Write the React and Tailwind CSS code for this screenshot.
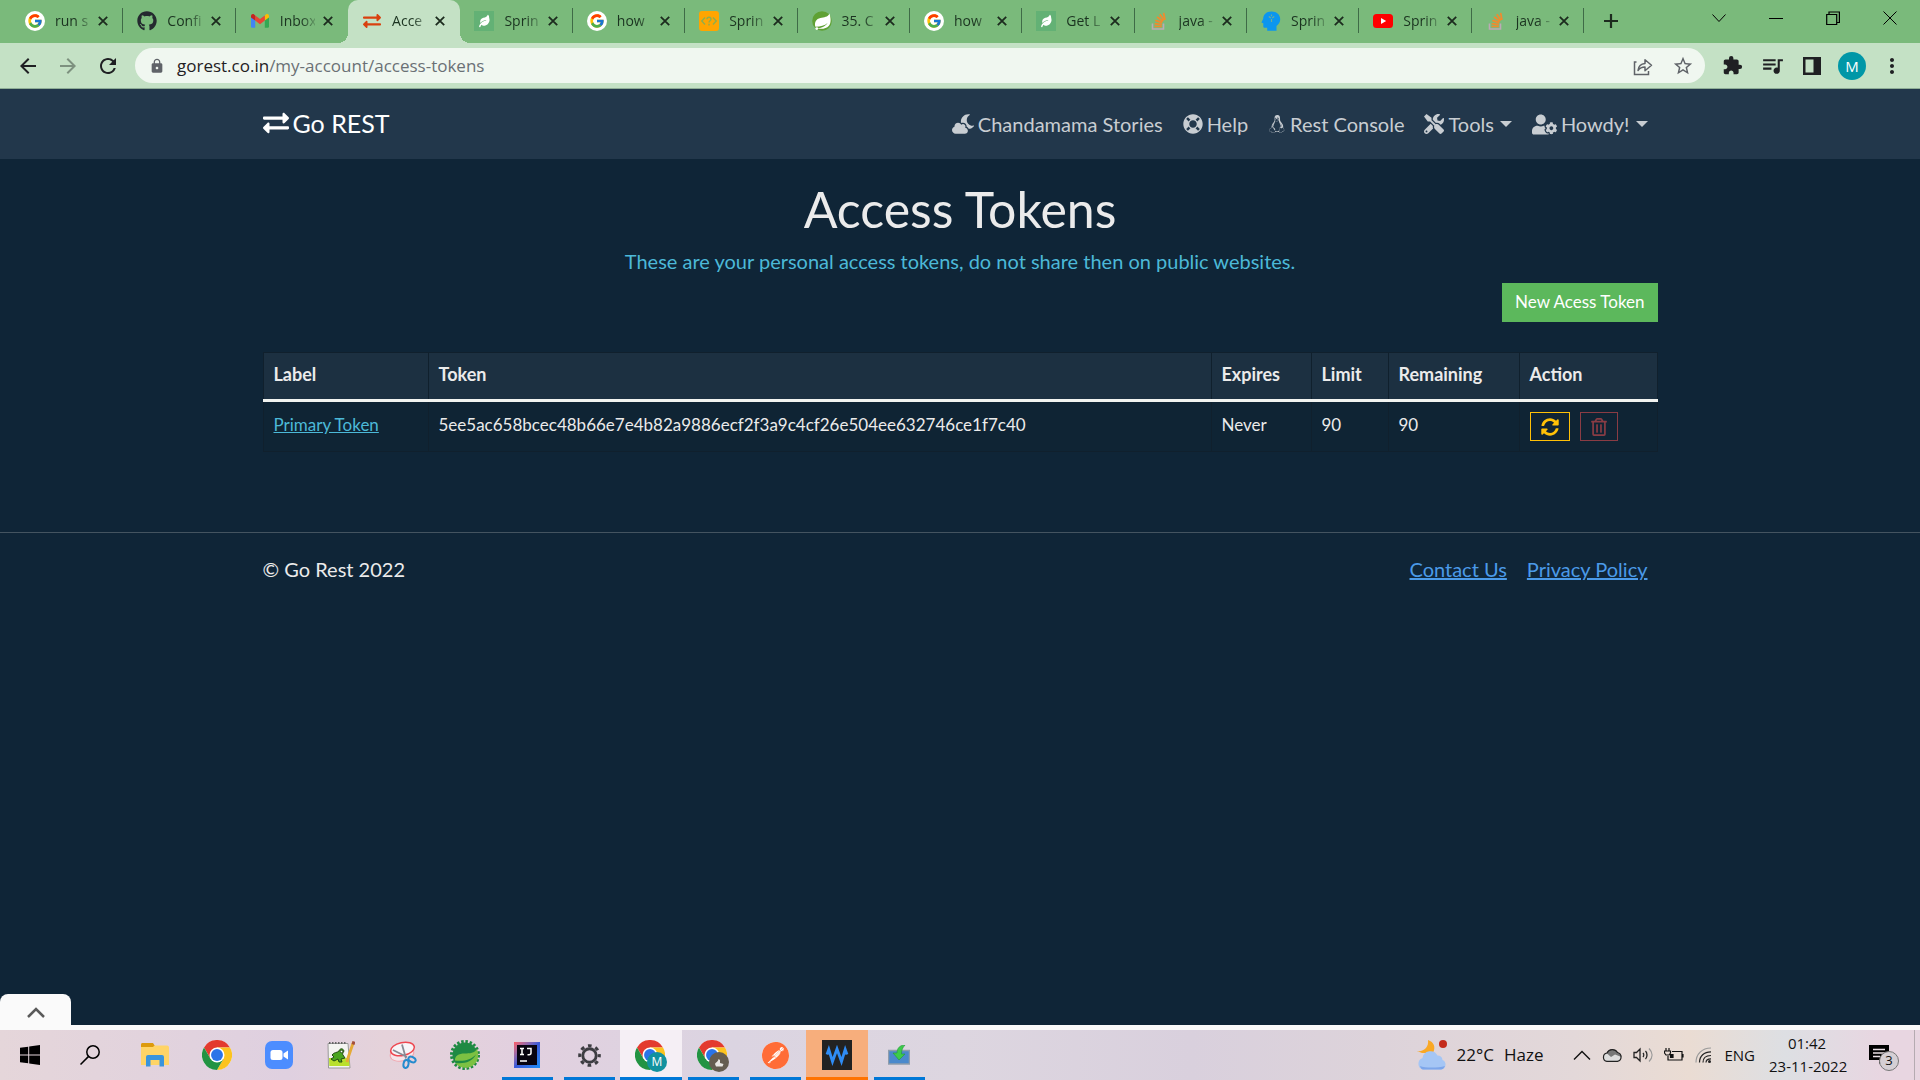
import React from "react";
import {
  FaExchangeAlt,
  FaCloudMoon,
  FaLifeRing,
  FaLinux,
  FaTools,
  FaUserCog,
  FaSyncAlt,
  FaRegTrashAlt,
  FaGithub,
  FaLeaf,
} from "react-icons/fa";
import { FcGoogle } from "react-icons/fc";
import { SiPostman } from "react-icons/si";
import { MdArrowBack, MdArrowForward, MdRefresh, MdLock, MdStarBorder, MdExtension, MdQueueMusic, MdMoreVert } from "react-icons/md";

/* ---------- favicons ---------- */

const Google = () => (
  <span className="flex size-5 items-center justify-center rounded-full bg-white">
    <FcGoogle className="size-4" />
  </span>
);

const Gmail = () => (
  <svg viewBox="0 0 20 20" className="size-5">
    <path d="M1 5v10.500a1.200 1.200 0 0 0 1.200 1.200h3V8.600z" fill="#4285f4" />
    <path d="M19 5v10.500a1.200 1.200 0 0 1-1.200 1.200h-3V8.600z" fill="#34a853" />
    <path d="M14.800 4.400v5.200L19 6.400V5c0-1.600-1.800-2.500-3.100-1.500z" fill="#fbbc04" />
    <path d="M5.200 9.600V4.400L10 8l4.800-3.600v5.200L10 13.200z" fill="#ea4335" />
    <path d="M1 5v1.400l4.200 3.200V4.400l-1.100-.9C2.800 2.500 1 3.400 1 5z" fill="#c5221f" />
  </svg>
);

const Baeldung = () => (
  <span className="flex size-5 items-center justify-center bg-[#63b175]">
    <FaLeaf className="size-3 -rotate-12 text-white" />
  </span>
);

const CodeQuestion = () => (
  <svg viewBox="0 0 20 20" className="size-5">
    <rect width="20" height="20" rx="3" fill="#ffa500" />
    <g fill="none" stroke="#8fae4c" strokeWidth="1.400">
      <path d="M6 6.500 2.800 10 6 13.500M14 6.500 17.200 10 14 13.500" />
      <path d="M8 8.200c0-2.600 4-2.600 4 0 0 1.600-2 1.600-2 3.400M10 12.800v1.600" />
    </g>
  </svg>
);

const SpringFavicon = () => (
  <svg viewBox="0 0 20 20" className="size-5">
    <circle cx="10" cy="10" r="9.800" fill="#5fa134" />
    <path d="M17.500 2.500c1.600 5.400 1.700 9.500-.6 12.300-2.600 3.200-7.300 3.400-11.600 2.700 3.600-.4 8-1.800 10.300-5.500-3 2.700-7 3.600-12.200 3.700-1.400-4.300.9-8 5-8.800 3.800-.7 7.300-.6 9.100-4.400z" fill="#fff" />
    <circle cx="4.800" cy="17.600" r="1.400" fill="#fff" />
  </svg>
);

const StackOverflow = () => (
  <svg viewBox="0 0 20 20" className="size-5">
    <path d="M3.500 12.500v5.500h11v-5.500" fill="none" stroke="#bcaab5" strokeWidth="1.600" />
    <g stroke="#f28a2d" strokeWidth="1.700">
      <path d="M5.500 15.500h7.300M5.600 12.600l7.200 1M6.300 9.400l6.900 2.200M8 6l6 4.200M10.800 3.300l4.200 5.900M14.600 1.800l1.400 7" />
    </g>
  </svg>
);

const BlueHead = () => (
  <svg viewBox="0 0 20 20" className="size-5">
    <path d="M10.500.5C5 .5 2.200 4 2.200 7.800L.4 11.600l1.900.6v3.300c0 .9.600 1.300 1.500 1.300h2.400v2.900h9.300v-4.800c2.300-1.700 3.700-4 3.700-6.700C19.200 3.800 15.800.5 10.500.5z" fill="#0c96ef" />
    <path d="M10.500 11V8M7.800 5.500l2 1.500M13.200 5.500l-2 1.500M10.500 3.600v1.600" stroke="#6fae9c" strokeWidth="1.200" />
  </svg>
);

const YouTube = () => (
  <svg viewBox="0 0 20 20" className="size-5">
    <rect y="3" width="20" height="14" rx="3.500" fill="#f00" />
    <path d="M8 7v6l5.200-3z" fill="#fff" />
  </svg>
);

const TABS = [
  { title: "run s", icon: <Google /> },
  { title: "Confi", icon: <FaGithub className="size-5 text-[#24292f]" /> },
  { title: "Inbox", icon: <Gmail /> },
  { title: "Acce", icon: <FaExchangeAlt className="size-[18px] text-[#d9400f]" />, active: true },
  { title: "Sprin", icon: <Baeldung /> },
  { title: "how", icon: <Google /> },
  { title: "Sprin", icon: <CodeQuestion /> },
  { title: "35. C", icon: <SpringFavicon /> },
  { title: "how", icon: <Google /> },
  { title: "Get L", icon: <Baeldung /> },
  { title: "java -", icon: <StackOverflow /> },
  { title: "Sprin", icon: <BlueHead /> },
  { title: "Sprin", icon: <YouTube /> },
  { title: "java -", icon: <StackOverflow /> },
];

const Cross = ({ className }) => (
  <svg viewBox="0 0 10 10" className={className} fill="none" stroke="currentColor" strokeWidth="1.800">
    <path d="M.8.8l8.400 8.400M9.200.8.8 9.200" />
  </svg>
);

function Tab({ tab, next }) {
  const divider = tab.active || next?.active ? "border-transparent" : "border-[#3f6b47]";
  return (
    <div className={"relative flex h-full min-w-0 flex-1 items-center pb-0.5 " + (tab.active ? "rounded-t-[10px] bg-[#c4e1c5]" : "")}>
      {tab.active && (
        <>
          <span className="absolute bottom-0 -left-2.5 size-2.5 bg-[radial-gradient(circle_at_0_0,transparent_10px,#c4e1c5_10px)]" />
          <span className="absolute -right-2.5 bottom-0 size-2.5 bg-[radial-gradient(circle_at_100%_0,transparent_10px,#c4e1c5_10px)]" />
        </>
      )}
      <div className={"flex h-[25px] w-full items-center border-r pr-3.5 pl-3.5 " + divider}>
        <span className="flex w-5 shrink-0 justify-center">{tab.icon}</span>
        <a href="#tab" className="ml-2.5 min-w-0 flex-1 overflow-hidden [mask-image:linear-gradient(to_right,black_60%,rgb(0_0_0/0.25))] text-sm whitespace-nowrap text-[#1b3320]">
          {tab.title}
        </a>
        <button aria-label="Close tab" className="ml-2 shrink-0">
          <Cross className="size-2.5 text-[#1c2b1e]" />
        </button>
      </div>
    </div>
  );
}

const windowButton = "flex w-[57px] items-center justify-center";

function TabStrip() {
  return (
    <div className="flex h-[43px] bg-[#7aba7b] pl-[11px]">
      <div className="flex min-w-0 flex-1">
        {TABS.map((tab, i) => (
          <Tab key={i} tab={tab} next={TABS[i + 1]} />
        ))}
      </div>
      <button aria-label="New tab" className="flex w-[54px] items-center justify-center pb-0.5 text-[#1c2b1e]">
        <svg viewBox="0 0 16 16" className="size-4" stroke="currentColor" strokeWidth="2.200">
          <path d="M8 1v14M1 8h14" />
        </svg>
      </button>
      <div className="mr-0.5 ml-[52px] flex h-9 text-black">
        <button aria-label="Search tabs" className={windowButton}>
          <svg viewBox="0 0 14 14" className="size-3.5" fill="none" stroke="currentColor"><path d="M.5 3.500 7 10.500l6.500-7" /></svg>
        </button>
        <button aria-label="Minimize" className={windowButton}>
          <svg viewBox="0 0 14 14" className="size-3.5" stroke="currentColor"><path d="M0 7.500h14" /></svg>
        </button>
        <button aria-label="Restore" className={windowButton}>
          <svg viewBox="0 0 14 14" className="size-3.5" fill="none" stroke="currentColor" strokeWidth="1.200"><path d="M.7 3.500h10v10H.7zM3 3.500V1h10.400v10.500H11" /></svg>
        </button>
        <button aria-label="Close" className={windowButton}>
          <svg viewBox="0 0 14 14" className="size-3.5" stroke="currentColor"><path d="M.5.5l13 13M13.500.5l-13 13" /></svg>
        </button>
      </div>
    </div>
  );
}

const toolButton = "flex w-10 items-center justify-center";

function Toolbar() {
  return (
    <div className="flex h-[46px] items-center border-b border-[#8fae97] bg-[#c4e1c5] pr-2 pl-2 text-[#1f2023]">
      <button aria-label="Back" className={toolButton}><MdArrowBack className="size-6" /></button>
      <button aria-label="Forward" className={toolButton + " text-[#7d917f]"}><MdArrowForward className="size-6" /></button>
      <button aria-label="Reload" className={toolButton}><MdRefresh className="size-6" /></button>
      <div className="mr-[7px] ml-[7px] flex h-[35px] flex-1 items-center rounded-full bg-[#f0f7f0] pr-0.5 pl-3.5 text-[#5f6368]">
        <MdLock className="size-4 shrink-0" />
        <label className="relative ml-3 flex-1 text-[17px] leading-6">
          <input aria-label="Address" defaultValue="gorest.co.in/my-account/access-tokens" className="block w-full bg-transparent text-[#6a7075] outline-none" />
          <span aria-hidden="true" className="pointer-events-none absolute top-0 left-0 bg-[#f0f7f0] text-[#1f2023]">gorest.co.in</span>
        </label>
        <button aria-label="Share" className={toolButton}>
          <svg viewBox="0 0 20 20" className="size-5" fill="none" stroke="currentColor" strokeWidth="1.500">
            <path d="M3.500 6H1.500v12.500h14V15" />
            <path d="M5 14.500c.5-4.500 3-6.700 7-7V3.700l6.500 5.500-6.500 5.500V11c-3 0-5.200.9-7 3.500z" strokeLinejoin="round" />
          </svg>
        </button>
        <button aria-label="Bookmark" className={toolButton}><MdStarBorder className="size-[22px]" /></button>
      </div>
      <button aria-label="Extensions" className={toolButton}><MdExtension className="size-[21px]" /></button>
      <button aria-label="Media" className={toolButton}><MdQueueMusic className="size-[25px]" /></button>
      <button aria-label="Side panel" className={toolButton}>
        <svg viewBox="0 0 18 18" className="size-[18px]"><path d="M0 0h18v18H0z" fill="currentColor" /><path d="M2.500 2.500h8v13h-8z" fill="#c4e1c5" /></svg>
      </button>
      <button aria-label="Profile" className={toolButton}>
        <span className="flex size-7 items-center justify-center rounded-full bg-[#0097a7] text-[15px] leading-5 text-white">M</span>
      </button>
      <button aria-label="Menu" className={toolButton}><MdMoreVert className="size-6" /></button>
    </div>
  );
}

/* ---------- page ---------- */

const container = "mx-auto w-[calc(100%-3rem)] max-w-[1395px]";
const navLink = "flex items-center gap-1";

const Caret = () => (
  <svg viewBox="0 0 12 6" className="ml-0.5 h-1.5 w-3" fill="currentColor"><path d="M0 0h12L6 6z" /></svg>
);

function Navbar() {
  return (
    <nav className="bg-[#22374b]">
      <div className={container + " flex h-[70px] items-center justify-between"}>
        <a href="#home" className="flex items-center gap-1 pb-0.5 text-[25px] leading-8 text-white">
          <FaExchangeAlt className="size-[26px]" />
          Go REST
        </a>
        <div className="flex gap-5 pr-2.5 text-xl text-[#c8cdd2]">
          <a href="#stories" className={navLink}><FaCloudMoon className="size-[22px]" />Chandamama Stories</a>
          <a href="#help" className={navLink}><FaLifeRing className="size-5" />Help</a>
          <a href="#console" className={navLink}><FaLinux className="size-[18px]" />Rest Console</a>
          <button className={navLink}><FaTools className="size-5" />Tools<Caret /></button>
          <button className={navLink}><FaUserCog className="size-[25px]" />Howdy!<Caret /></button>
        </div>
      </div>
    </nav>
  );
}

const cell = "border-x border-[#10202d] px-2.5 text-left";

function TokenTable() {
  return (
    <table className="mt-[30px] w-full table-fixed border-collapse bg-[#0f2434]">
      <thead className="border-t border-b-[3px] border-t-[#10202d] border-b-[#f1f3f0] bg-[#1c3041] text-lg text-[#ebebeb]">
        <tr className="h-12">
          <th className={cell + " w-[165px] pb-1"}>Label</th>
          <th className={cell + " pb-1"}>Token</th>
          <th className={cell + " w-[100px] pb-1"}>Expires</th>
          <th className={cell + " w-[77px] pb-1"}>Limit</th>
          <th className={cell + " w-[131px] pb-1"}>Remaining</th>
          <th className={cell + " w-[138px] pb-1"}>Action</th>
        </tr>
      </thead>
      <tbody className="text-[17px] leading-6 text-[#ebebeb]">
        <tr className="h-[51px] border-b border-[#10202d]">
          <td className={cell + " pb-1"}><a href="#token" className="text-[#4cb9d8] underline">Primary Token</a></td>
          <td className={cell + " pb-1"}>5ee5ac658bcec48b66e7e4b82a9886ecf2f3a9c4cf26e504ee632746ce1f7c40</td>
          <td className={cell + " pb-1"}>Never</td>
          <td className={cell + " pb-1"}>90</td>
          <td className={cell + " pb-1"}>90</td>
          <td className={cell}>
            <div className="flex gap-2.5">
              <button aria-label="Regenerate" className="flex h-[29px] w-10 items-center justify-center border border-[#ffc107] text-[#ffc107]"><FaSyncAlt className="size-[18px]" /></button>
              <button aria-label="Delete" className="flex h-[29px] w-[38px] items-center justify-center border border-[#8a3c44] text-[#8a3c44]"><FaRegTrashAlt className="size-[18px]" /></button>
            </div>
          </td>
        </tr>
      </tbody>
    </table>
  );
}

function Page() {
  return (
    <div className="relative flex flex-1 flex-col bg-[#0f2537] font-[Lato,sans-serif]">
      <Navbar />
      <main className={container + " flex flex-col pt-5"}>
        <h1 className="mb-2 text-center text-[50px] leading-[60px] text-[#ebebeb]">Access Tokens</h1>
        <p className="text-center text-xl text-[#4cb9d8]">These are your personal access tokens, do not share then on public websites.</p>
        <button className="mt-2 h-[39px] self-end bg-[#5cb85c] px-[13px] pb-0.5 text-[17px] text-white">New Acess Token</button>
        <TokenTable />
      </main>
      <footer className="mt-20 border-t border-[#445460]">
        <div className={container + " flex justify-between pt-[22px] text-xl text-[#ebebeb]"}>
          <span>© Go Rest 2022</span>
          <div className="flex gap-5 pr-2.5 text-[#4b9ae8]">
            <a href="#contact" className="underline">Contact Us</a>
            <a href="#privacy" className="underline">Privacy Policy</a>
          </div>
        </div>
      </footer>
      <button aria-label="Show panel" className="absolute bottom-0 left-0 flex h-[31px] w-[71px] items-center justify-center rounded-t-lg bg-[#fafafa] pt-1.5 text-[#5a5a5a]">
        <svg viewBox="0 0 18 11" className="h-[11px] w-[18px]" fill="none" stroke="currentColor" strokeWidth="2.500"><path d="M1 10l8-8 8 8" /></svg>
      </button>
    </div>
  );
}

/* ---------- taskbar ---------- */

const Chrome = ({ className = "size-[30px]" }) => (
  <svg viewBox="0 0 48 48" className={className}>
    <circle cx="24" cy="24" r="24" fill="#fff" />
    <path d="M24 12h20.800A24 24 0 0 0 3.200 12l10.400 18z" fill="#e33b2e" />
    <path d="M34.400 30 24 48A24 24 0 0 0 44.800 12H24z" fill="#fcc31e" />
    <path d="M13.600 30 3.200 12A24 24 0 0 0 24 48l10.400-18z" fill="#229342" />
    <circle cx="24" cy="24" r="12" fill="#fff" />
    <circle cx="24" cy="24" r="9.500" fill="#2a74e8" />
  </svg>
);

const Explorer = () => (
  <svg viewBox="0 0 28 24" className="h-6 w-7">
    <path d="M0 1.500C0 .7.600 0 1.500 0H12l2 3v4H0z" fill="#dd9a0c" />
    <path d="M0 4h12l1.500-1.500H26a2 2 0 0 1 2 2V22H0z" fill="#ffd466" />
    <path d="M5 23.500V14a2 2 0 0 1 2-2h14a2 2 0 0 1 2 2v9.500h-4.500V17h-9v6.500z" fill="#3a94dc" />
  </svg>
);

const Zoom = () => (
  <svg viewBox="0 0 28 28" className="size-7">
    <rect width="28" height="28" rx="7" fill="#4c8dff" />
    <rect x="5.500" y="9" width="12" height="10" rx="2.500" fill="#fff" />
    <path d="M18.500 12.500 23 9.500v9l-4.500-3z" fill="#fff" />
  </svg>
);

const Notepad = () => (
  <svg viewBox="0 0 28 28" className="size-7">
    <path d="M1 2.500h20L23 27H1.500z" fill="#f4f4f1" stroke="#999" />
    <path d="M2 2h18" stroke="#666" strokeWidth="2" strokeDasharray="1.500 1.500" />
    <path d="M2 17h20l.5 8H2.300z" fill="#b9e02c" />
    <path d="M5 14c2-3 5-2 7-4 1-3 4-3 5 0-1 2-2 3-1 4l2 3-4 1 1 3h-3l-1-3-4 2-3-2 3-2z" fill="#4aa51f" stroke="#234d12" />
    <circle cx="14.500" cy="10.500" r="1.300" fill="#fff" stroke="#234d12" />
    <path d="M26.500 1 21 17l-1 4" stroke="#e5aa36" strokeWidth="2.800" fill="none" />
    <path d="M27 .5l-1 3" stroke="#a34d3c" strokeWidth="3" />
  </svg>
);

const Snip = () => (
  <svg viewBox="0 0 28 28" className="size-7" fill="none">
    <ellipse cx="13" cy="13" rx="12" ry="7" transform="rotate(-12 13 13)" fill="#f5e5ea" stroke="#f0a5ad" />
    <ellipse cx="13.500" cy="8" rx="12" ry="6.500" transform="rotate(-12 13.500 8)" fill="#f7f5f8" stroke="#ee4851" strokeWidth="1.500" />
    <path d="M4 9l14 7M13 3.500l4 14" stroke="#888b95" strokeWidth="1.800" />
    <ellipse cx="23" cy="18.500" rx="3.800" ry="2.500" transform="rotate(25 23 18.500)" stroke="#258bce" strokeWidth="2" />
    <ellipse cx="17" cy="23" rx="2.500" ry="4" transform="rotate(10 17 23)" stroke="#258bce" strokeWidth="2" />
  </svg>
);

const SpringTools = () => (
  <svg viewBox="0 0 30 30" className="size-[30px]">
    <circle cx="15" cy="15" r="13.500" fill="none" stroke="#1f8a43" strokeWidth="3" strokeDasharray="2.500 1.740" />
    <circle cx="15" cy="15" r="12.500" fill="#1f8a43" />
    <path d="M27 9c2.500 7 1 13-4 16.500-6 4-14 2.500-17.500-2.500 9 1 16.500-1 20.500-8.500-5 5.500-12 7-21 6C4.500 16 9 13.500 14.500 13.500 20 13.500 24.500 13 27 9z" fill="#7cc142" />
  </svg>
);

const IntelliJ = () => (
  <span className="flex size-[26px] items-center justify-center bg-linear-to-br from-[#fc5a63] via-[#3a59d8] to-[#158df7]">
    <svg viewBox="0 0 20 20" className="size-5">
      <path d="M0 0h20v20H0z" fill="#080410" />
      <path d="M3 3.500h4M5 3.500v6M3 9.500h4M10 3.500h4V8c0 1.200-.8 1.700-2 1.700h-1.500M3 16h7" fill="none" stroke="#fff" strokeWidth="1.500" />
    </svg>
  </span>
);

const Gear = () => (
  <svg viewBox="0 0 24 24" className="size-[23px]" fill="none" stroke="#3d3d42">
    <circle cx="12" cy="12" r="7" strokeWidth="3" />
    <circle cx="12" cy="12" r="10.200" strokeWidth="3.200" strokeDasharray="3.800 4.211" strokeDashoffset="1.900" />
  </svg>
);

const Badged = ({ children }) => (
  <span className="relative mt-0.5 block size-8">
    <Chrome />
    {children}
  </span>
);

const Wave = () => (
  <svg viewBox="0 0 30 30" className="size-[30px]">
    <path d="M0 0h30v30H0z" fill="#222222" />
    <path d="M5 14.500 6.800 9.500 10.500 21.500 15 9 19.500 21.500 23.200 9.500 25 14.500" fill="none" stroke="#2f8cf5" strokeWidth="2.800" />
  </svg>
);

const Download = () => (
  <svg viewBox="0 0 22 20" className="h-5 w-[22px]">
    <path d="M.5 5.500h21v13.500H.5z" fill="#4a89cc" stroke="#8f9dac" strokeWidth="1.500" />
    <path d="M17 0c-5 0-8 3-8 8H5l6 7 6-6h-3.500c0-4 1-6 3.500-9z" fill="#3ccb4a" stroke="#23963a" strokeWidth=".6" />
  </svg>
);

const APPS = [
  { name: "File Explorer", icon: <Explorer /> },
  { name: "Chrome", icon: <Chrome /> },
  { name: "Zoom", icon: <Zoom /> },
  { name: "Notepad++", icon: <Notepad /> },
  { name: "Snipping Tool", icon: <Snip /> },
  { name: "Spring Tool Suite", icon: <SpringTools /> },
  { name: "IntelliJ IDEA", icon: <IntelliJ />, state: "open" },
  { name: "Settings", icon: <Gear />, state: "open" },
  {
    name: "Chrome, profile M",
    state: "active",
    icon: (
      <Badged>
        <span className="absolute right-0 bottom-0 flex size-5 items-center justify-center rounded-full bg-[#12929f] text-xs text-white">M</span>
      </Badged>
    ),
  },
  {
    name: "Chrome, second profile",
    state: "open",
    icon: (
      <Badged>
        <svg viewBox="0 0 20 20" className="absolute right-0 bottom-0 size-5">
          <circle cx="10" cy="10" r="10" fill="#655d50" />
          <path d="M6 12c1-2 3-2 3.500-5l1.500 1v3l3.500 1-1 2.500H7z" fill="#e8e6e2" />
        </svg>
      </Badged>
    ),
  },
  {
    name: "Postman",
    state: "open",
    icon: (
      <span className="flex rounded-full bg-white">
        <SiPostman className="size-[27px] text-[#ff6c37]" />
      </span>
    ),
  },
  { name: "Recorder", icon: <Wave />, state: "alert" },
  { name: "Installer", icon: <Download />, state: "open" },
];

const slotStyle = { open: "", active: "bg-[#f5eff5]", alert: "bg-[#f7ae7c]" };
const barStyle = {
  open: "w-[51px] bg-[#0078d7]",
  active: "w-full bg-[#0078d7]",
  alert: "w-full bg-[#ff7300]",
};

const Weather = () => (
  <svg viewBox="0 0 30 30" className="size-[30px]">
    <path d="M11 0c6 2 8 7 5 13H5L0 11c7 1 12-4 11-11z" fill="#f9a825" />
    <path d="M6 29.500a6 6 0 0 1-.5-11.500 8 8 0 0 1 15-2.500 5 5 0 0 1 5 4.500 5 5 0 0 1-1 9.500z" fill="#a5c6f5" />
    <path d="M3 26c5 2 18 2 25 0-1 2.500-2.500 3.500-4 3.500H6c-1.500 0-2.500-1.500-3-3.500z" fill="#7da6ea" />
    <circle cx="26" cy="4" r="4" fill="#c42b1c" />
  </svg>
);

function Tray() {
  return (
    <div className="flex items-center text-[17px] text-[#111]">
      <Weather />
      <span className="ml-2.5">22°C</span>
      <span className="ml-2.5">Haze</span>
      <div className="ml-[30px] flex items-center gap-[11px]">
        <svg viewBox="0 0 18 10" className="h-2.5 w-[18px]" fill="none" stroke="currentColor" strokeWidth="1.400"><path d="M1 9.500l8-8 8 8" /></svg>
        <svg viewBox="0 0 20 14" className="h-3.5 w-5">
          <path d="M5 13.300a4.200 4.200 0 0 1 0-8.300 6 6 0 0 1 10.500-.5 4.500 4.500 0 0 1 0 8.800z" fill="#ddd" />
          <path d="M4.500 5C6.500.5 13 0 15.500 4.500c2.500.3 4 2 4 4.500L13 6.500 9 9z" fill="#777" />
          <path d="M5 13.300a4.200 4.200 0 0 1 0-8.300 6 6 0 0 1 10.500-.5 4.500 4.500 0 0 1 0 8.800z" fill="none" stroke="#222" strokeWidth="1.200" />
        </svg>
        <svg viewBox="0 0 20 16" className="h-4 w-5" fill="none" stroke="#222" strokeWidth="1.300">
          <path d="M1 5.500h2.500L7 2v12l-3.500-3.500H1zM10 6c1 1 1 3 0 4M12.500 4c2 2 2 6 0 8" />
          <path d="M16 1.500c4 4 4 9 0 13" stroke="#999" />
        </svg>
        <svg viewBox="0 0 20 14" className="h-3.5 w-5" fill="none" stroke="#111" strokeWidth="1.200">
          <path d="M8 3.500h10v8.500H4V8M19 6v3.500M2 0v3M5 0v3M.5 3h6v2L5 7H2L.5 5z" />
          <path d="M6.500 6.500H9v3H6.500z" fill="#111" />
        </svg>
        <svg viewBox="0 0 17 16" className="h-4 w-[17px]" fill="none" stroke="#222" strokeWidth="1.200">
          <path d="M1 15.500C1 7 7 1 16 1" stroke="#999" />
          <path d="M4.500 15.500C4.500 9 9 4.800 16 4.800M8 15.500c0-4.500 3-7 8-7M11 15.500c0-2.500 1.800-3.700 5-3.700" />
          <circle cx="14.500" cy="14.500" r="1.500" fill="#222" stroke="none" />
        </svg>
      </div>
      <span className="ml-3 text-[15px]">ENG</span>
      <div className="ml-3.5 w-[76px] text-center text-[15px] leading-[23px] whitespace-nowrap">
        <div>01:42</div>
        <div>23-11-2022</div>
      </div>
      <button aria-label="Notifications" className="relative ml-6 h-8 w-[30px]">
        <svg viewBox="0 0 20 20" className="size-5"><path d="M0 0h20v15h-6l-4 4v-4H0z" /><path d="M4 4.500h12M4 8h12M4 11.500h7" stroke="#eadfe5" strokeWidth="1.300" /></svg>
        <span className="absolute right-0 bottom-0 flex size-5 items-center justify-center rounded-full border border-[#777] bg-[#d5cfd4] text-[13px]">3</span>
      </button>
      <span className="ml-[15px] h-[50px] w-1.5 border-l border-[#b5abb1]" />
    </div>
  );
}

function Taskbar() {
  return (
    <div className="flex h-[50px] justify-between bg-[linear-gradient(to_right,#e5d6da_0%,#dfd0e0_15%,#e5d2da_20%,#e2d0df_27%,#dbd4e1_38%,#ddd6e0_50%,#d9d0dd_62%,#ddd3da_72%,#e3d8d9_82%,#eadcd3_88%,#dddfe3_93%,#e8d6e1_98%)]">
      <div className="flex">
        <button aria-label="Start" className="flex w-[60px] items-center justify-center">
          <svg viewBox="0 0 20 20" className="size-5"><path d="M0 2.800 8.200 1.700v7.800H0zM9.200 1.500 20 0v9.500H9.200zM0 10.500h8.200v7.800L0 17.200zM9.200 10.500H20V20L9.200 18.500z" /></svg>
        </button>
        <button aria-label="Search" className="mr-1 flex w-[60px] items-center justify-center">
          <svg viewBox="0 0 20 20" className="size-5" fill="none" stroke="#000" strokeWidth="1.500"><circle cx="13" cy="7" r="6.200" /><path d="M8.600 11.400.5 19.500" /></svg>
        </button>
        {APPS.map((app) => (
          <button key={app.name} aria-label={app.name} className={"relative flex w-[62px] items-center justify-center " + (slotStyle[app.state] ?? "")}>
            {app.icon}
            {app.state && (
              <span className="absolute inset-x-0 bottom-0 flex justify-center">
                <span className={"h-[3px] " + barStyle[app.state]} />
              </span>
            )}
          </button>
        ))}
      </div>
      <Tray />
    </div>
  );
}

export default function App() {
  return (
    <div className="flex min-h-screen flex-col font-['Open_Sans','Noto_Sans',sans-serif]">
      <TabStrip />
      <Toolbar />
      <Page />
      <div className="h-[5px] bg-[#fafafa]" />
      <Taskbar />
    </div>
  );
}
